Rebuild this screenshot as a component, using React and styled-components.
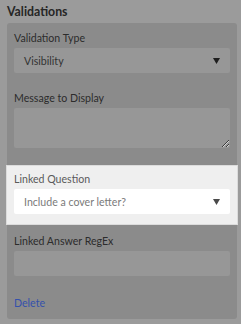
import React from "react";
import styled, { createGlobalStyle } from "styled-components";

const Global = createGlobalStyle`
  html, body { margin: 0; padding: 0; background: #9b9b9b; }
  body { font-family: Lato, "Open Sans", Arial, sans-serif; }
`;

const Page = styled.div`
  width: 241px;
  height: 324px;
  box-sizing: border-box;
  padding: 4px 4px 0 7px;
  background: #9b9b9b;
  overflow: hidden;
`;

const Title = styled.h2`
  margin: 0 0 4px;
  font-size: 12.3px;
  line-height: 15px;
  font-weight: 700;
  color: #262626;
`;

const Card = styled.div`
  width: 230px;
  box-sizing: border-box;
  background: #8b8b8b;
  border-radius: 3px;
  padding-bottom: 9px;
  display: flex;
  flex-direction: column;
`;

const Field = styled.div`
  padding: ${(p) => p.$pt}px 7px 10px;
  margin-top: ${(p) => p.$mt || 0}px;
  background: ${(p) => (p.$active ? "#efefef" : "transparent")};
  box-shadow: ${(p) => (p.$active ? "0 0 0 1px #dcdcdc" : "none")};
`;

const Label = styled.div`
  font-size: 10.6px;
  line-height: 14px;
  margin-bottom: 3px;
  color: ${(p) => (p.$active ? "#5a5a5a" : "#2c2c2c")};
`;

const SelectBox = styled.div`
  height: 25px;
  box-sizing: border-box;
  border-radius: 2px;
  background: ${(p) => (p.$active ? "#ffffff" : "#979797")};
  display: flex;
  align-items: center;
  justify-content: space-between;
  padding: 0 10px 0 10px;
  font-size: 10.6px;
  color: ${(p) => (p.$active ? "#7a7a7a" : "#333333")};
`;

const Caret = styled.svg`
  width: 7px;
  height: 6px;
  display: block;
`;

const TextArea = styled.textarea`
  display: block;
  width: 100%;
  height: 40px;
  box-sizing: border-box;
  border: none;
  border-radius: 2px;
  background: #979797;
  resize: vertical;
  margin: 0;
  padding: 0;
  outline: none;
`;

const Input = styled.div`
  height: 25px;
  border-radius: 2px;
  background: #979797;
`;

const DeleteLink = styled.a`
  display: block;
  margin: 10px 7px 0;
  font-size: 10.6px;
  line-height: 14px;
  color: #3451ac;
  text-decoration: none;
  cursor: pointer;
`;

function Select({ value, active }) {
  return (
    <SelectBox $active={active}>
      <span>{value}</span>
      <Caret viewBox="0 0 7 6">
        <polygon points="0,0 7,0 3.5,6" fill={active ? "#4a4a4a" : "#1e1e1e"} />
      </Caret>
    </SelectBox>
  );
}

export default function App() {
  return (
    <>
      <Global />
      <Page>
        <Title>Validations</Title>
        <Card>
          <Field $pt={8}>
            <Label>Validation Type</Label>
            <Select value="Visibility" />
          </Field>
          <Field $pt={8}>
            <Label>Message to Display</Label>
            <TextArea />
          </Field>
          <Field $pt={6} $mt={8} $active>
            <Label $active>Linked Question</Label>
            <Select value="Include a cover letter?" active />
          </Field>
          <Field $pt={10}>
            <Label>Linked Answer RegEx</Label>
            <Input />
          </Field>
          <DeleteLink>Delete</DeleteLink>
        </Card>
      </Page>
    </>
  );
}
